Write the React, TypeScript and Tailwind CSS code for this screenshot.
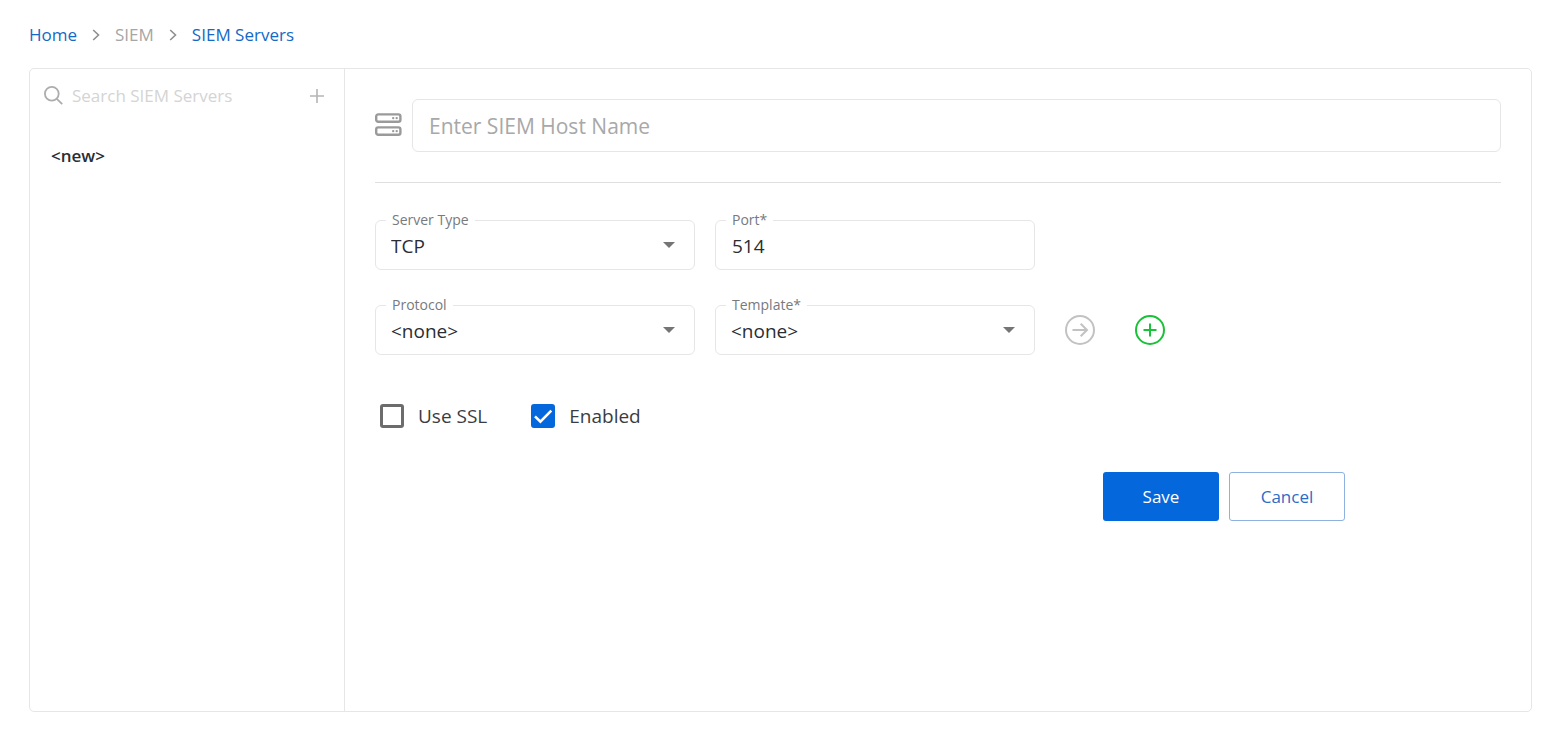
import { useState, type ReactNode } from "react";

const selectText =
  "block h-8 w-full appearance-none bg-transparent px-[5px] text-[19px] leading-8 text-[#2b2d33] outline-none";

function Field({ id, label, children }: { id: string; label: string; children: ReactNode }) {
  return (
    <fieldset className="relative h-[60px] w-80 min-w-0 rounded-md border border-[#e6e6e6] px-2.5">
      <legend className="px-1.5 text-sm leading-5 text-[#777a7e]">
        <label htmlFor={id}>{label}</label>
      </legend>
      {children}
    </fieldset>
  );
}

function SelectField({ id, label, options }: { id: string; label: string; options: string[] }) {
  return (
    <Field id={id} label={label}>
      <select id={id} className={selectText}>
        {options.map((option) => (
          <option key={option}>{option}</option>
        ))}
      </select>
      <svg className="pointer-events-none absolute top-3 right-[19px] h-1.5 w-3" viewBox="0 0 12 6" aria-hidden="true">
        <path d="M0 0h12L6 6z" fill="#757575" />
      </svg>
    </Field>
  );
}

function Checkbox({ label, defaultChecked }: { label: string; defaultChecked?: boolean }) {
  const [checked, setChecked] = useState(Boolean(defaultChecked));
  return (
    <label className="flex items-center gap-3.5 text-[19px] leading-8 text-[#3a3c42]">
      <span className="relative block size-6">
        <input
          type="checkbox"
          checked={checked}
          onChange={(event) => setChecked(event.target.checked)}
          className="block size-6 appearance-none rounded-[3px] border-3 border-[#6c6c6c] checked:border-[#0567dc] checked:bg-[#0567dc]"
        />
        {checked && (
          <svg className="pointer-events-none absolute inset-0 size-6" viewBox="0 0 24 24" fill="none" aria-hidden="true">
            <path d="M4 12.3l5.4 5.4L20.3 6.6" stroke="#fff" strokeWidth="2.6" />
          </svg>
        )}
      </span>
      {label}
    </label>
  );
}

function Chevron() {
  return (
    <svg className="h-3 w-2" viewBox="0 0 8 12" fill="none" aria-hidden="true">
      <path d="M1.2 1l5.3 5-5.3 5" stroke="#8f8f8f" strokeWidth="1.6" />
    </svg>
  );
}

export default function App() {
  return (
    <div className="flex min-h-screen flex-col bg-white pr-7 pb-[17px] pl-[29px] font-['Open_Sans','Noto_Sans',sans-serif]">
      <nav aria-label="Breadcrumb" className="flex h-17 items-center pt-px text-[17px] text-[#1468c6]">
        <a href="#home">Home</a>
        <span className="px-[15px]"><Chevron /></span>
        <span className="text-[#a6a6a6]">SIEM</span>
        <span className="px-[15px]"><Chevron /></span>
        <a href="#servers">SIEM Servers</a>
      </nav>

      <div className="flex flex-1 rounded-[5px] border border-[#e6e6e6]">
        <aside className="w-[315px] shrink-0 border-r border-[#e6e6e6]">
          <div className="flex h-[54px] items-center pr-[19px] pl-3.5">
            <svg className="size-5 shrink-0" viewBox="0 0 20 20" fill="none" stroke="#adadad" strokeWidth="1.8" aria-hidden="true">
              <circle cx="7.8" cy="7.8" r="6.9" />
              <path d="M12.8 12.8l5.4 5.4" />
            </svg>
            <input
              type="search"
              aria-label="Search SIEM Servers"
              placeholder="Search SIEM Servers"
              className="ml-2 min-w-0 flex-1 text-[17px] outline-none placeholder:text-[#d4d4d4]"
            />
            <button type="button" aria-label="Add server" className="ml-2">
              <svg className="size-4" viewBox="0 0 16 16" stroke="#b5b5b5" strokeWidth="1.6" aria-hidden="true">
                <path d="M8 1v14M1 8h14" />
              </svg>
            </button>
          </div>
          <a href="#new" className="mt-[17px] block px-[21px] text-[17px] leading-8 font-semibold text-[#2a2d34]">
            &lt;new&gt;
          </a>
        </aside>

        <main className="min-w-0 flex-1 p-[30px]">
          <div className="flex items-center border-b border-[#dfdfdf] pb-[30px]">
            <svg className="h-[26px] w-[27px] shrink-0" viewBox="0 0 27 26" fill="none" stroke="#9a9a9a" strokeWidth="2.4" aria-hidden="true">
              <rect x="1.2" y="1.4" width="24.2" height="7.4" rx="2" />
              <rect x="1.2" y="14.4" width="24.2" height="7.4" rx="2" />
              <g fill="#9a9a9a" stroke="none">
                <circle cx="18.2" cy="5.1" r="1.2" />
                <circle cx="21.7" cy="5.1" r="1.2" />
                <circle cx="18.2" cy="18.1" r="1.2" />
                <circle cx="21.7" cy="18.1" r="1.2" />
              </g>
            </svg>
            <input
              type="text"
              aria-label="SIEM host name"
              placeholder="Enter SIEM Host Name"
              className="ml-2.5 h-[53px] min-w-0 flex-1 rounded-md border border-[#e6e6e6] px-4 text-[21px] outline-none placeholder:text-[#a8a8a8]"
            />
          </div>

          <form className="mt-[27px]" onSubmit={(event) => event.preventDefault()}>
            <div className="flex gap-5">
              <SelectField id="server-type" label="Server Type" options={["TCP", "UDP"]} />
              <Field id="port" label="Port*">
                <input
                  id="port"
                  type="text"
                  defaultValue="514"
                  className="block h-8 w-full px-1.5 text-[19px] leading-8 text-[#2b2d33] outline-none"
                />
              </Field>
            </div>
            <div className="mt-[25px] flex gap-5">
              <SelectField id="protocol" label="Protocol" options={["<none>"]} />
              <SelectField id="template" label="Template*" options={["<none>"]} />
              <div className="mt-5 ml-2.5 flex gap-10">
                <button type="button" aria-label="Open template" className="size-[30px]">
                  <svg className="size-[30px]" viewBox="0 0 30 30" fill="none" stroke="#c2c2c2" strokeWidth="2" aria-hidden="true">
                    <circle cx="15" cy="15" r="14" />
                    <path d="M7.5 15h14.2M15.7 8.7L22 15l-6.3 6.3" />
                  </svg>
                </button>
                <button type="button" aria-label="Add template" className="size-[30px]">
                  <svg className="size-[30px]" viewBox="0 0 30 30" fill="none" stroke="#19c238" strokeWidth="2" aria-hidden="true">
                    <circle cx="15" cy="15" r="14" />
                    <path d="M8.5 15h13M15 8.5v13" />
                  </svg>
                </button>
              </div>
            </div>

            <div className="mt-[45px] flex gap-11 pl-[5px]">
              <Checkbox label="Use SSL" />
              <Checkbox label="Enabled" defaultChecked />
            </div>

            <div className="mt-10 flex max-w-[970px] justify-end gap-2.5 text-[17px]">
              <button type="submit" className="h-[49px] w-29 rounded-[3px] bg-[#0567dc] text-white">Save</button>
              <button type="button" className="h-[49px] w-29 rounded-[3px] border border-[#8db2e0] text-[#2a6cc6]">Cancel</button>
            </div>
          </form>
        </main>
      </div>
    </div>
  );
}
